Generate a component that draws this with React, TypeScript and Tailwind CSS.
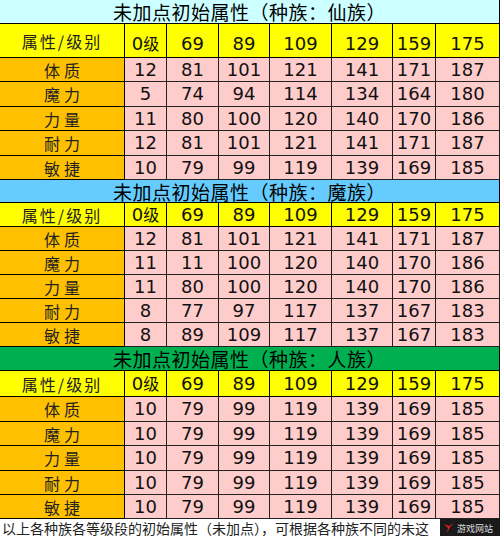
import React from 'react';

type Race = {
  title: string;
  headerBg: string;
  yellowH: string;
  rowHs: string[];
  rows: { label: string; values: number[] }[];
};

const levels = ['0级', '69', '89', '109', '129', '159', '175'];
const colW = ['w-[125px]', 'w-[42px]', 'w-[52px]', 'w-[51px]', 'w-[62px]', 'w-[61px]', 'w-[43px]', 'w-[64px]'];
const labels = ['体质', '魔力', '力量', '耐力', '敏捷'];

const races: Race[] = [
  {
    title: '未加点初始属性（种族：仙族）',
    headerBg: 'bg-[#ccffff] h-[24px]',
    yellowH: 'h-[34px]',
    rowHs: ['h-[24px]', 'h-[25px]', 'h-[24px]', 'h-[25px]', 'h-[24px]'],
    rows: [
      { label: '体质', values: [12, 81, 101, 121, 141, 171, 187] },
      { label: '魔力', values: [5, 74, 94, 114, 134, 164, 180] },
      { label: '力量', values: [11, 80, 100, 120, 140, 170, 186] },
      { label: '耐力', values: [12, 81, 101, 121, 141, 171, 187] },
      { label: '敏捷', values: [10, 79, 99, 119, 139, 169, 185] },
    ],
  },
  {
    title: '未加点初始属性（种族：魔族）',
    headerBg: 'bg-[#66ccff] h-[23px]',
    yellowH: 'h-[24px]',
    rowHs: ['h-[24px]', 'h-[24px]', 'h-[24px]', 'h-[24px]', 'h-[24px]'],
    rows: [
      { label: '体质', values: [12, 81, 101, 121, 141, 171, 187] },
      { label: '魔力', values: [11, 11, 100, 120, 140, 170, 186] },
      { label: '力量', values: [11, 80, 100, 120, 140, 170, 186] },
      { label: '耐力', values: [8, 77, 97, 117, 137, 167, 183] },
      { label: '敏捷', values: [8, 89, 109, 117, 137, 167, 183] },
    ],
  },
  {
    title: '未加点初始属性（种族：人族）',
    headerBg: 'bg-[#00b050] h-[24px]',
    yellowH: 'h-[26px]',
    rowHs: ['h-[25px]', 'h-[24px]', 'h-[25px]', 'h-[24px]', 'h-[24px]'],
    rows: labels.map((label) => ({ label, values: [10, 79, 99, 119, 139, 169, 185] })),
  },
];

const RaceTable: React.FC<{ race: Race; first: boolean }> = ({ race, first }) => (
  <section>
    <div
      className={`${race.headerBg} border-b border-r border-black flex items-center justify-center leading-none text-[19px] tracking-[0.5px] text-black font-['Noto_Sans_CJK_SC',sans-serif]`}
    >
      {race.title}
    </div>
    <div className={`flex ${race.yellowH} bg-[#ffff00]`}>
      <div
        className={`${colW[0]} border-r border-b border-black flex items-center justify-center leading-none text-[16px] tracking-[2px] text-[#222] font-['Noto_Sans_CJK_SC',sans-serif]`}
      >
        属性/级别
      </div>
      {levels.map((lv, i) => (
        <div
          key={lv}
          className={`${colW[i + 1]} border-r border-b border-black flex justify-center leading-none text-[18px] text-[#111] font-['DejaVu_Sans','Noto_Sans_CJK_SC',sans-serif] ${first ? 'items-end pb-[4px]' : 'items-center'}`}
        >
          {lv === '0级' ? (
            <span className="flex items-baseline">
              0<span className="text-[16px] font-['Noto_Sans_CJK_SC',sans-serif]">级</span>
            </span>
          ) : (
            lv
          )}
        </div>
      ))}
    </div>
    {race.rows.map((row, r) => (
      <div key={row.label} className={`flex ${race.rowHs[r]}`}>
        <div
          className={`${colW[0]} bg-[#ffc000] border-r border-b border-black flex items-center justify-center leading-none text-[16px] tracking-[4px] pl-[4px] text-[#222] font-['Noto_Sans_CJK_SC',sans-serif]`}
        >
          {row.label}
        </div>
        {row.values.map((v, i) => (
          <div
            key={i}
            className={`${colW[i + 1]} bg-[#ffcccc] border-r border-b border-[#222] flex items-center justify-center leading-none text-[18px] text-[#111] font-['DejaVu_Sans',sans-serif]`}
          >
            {v}
          </div>
        ))}
      </div>
    ))}
  </section>
);

export default function App() {
  return (
    <div className="w-[500px] h-[536px] bg-white overflow-hidden">
      {races.map((race, i) => (
        <RaceTable key={race.title} race={race} first={i === 0} />
      ))}
      <div className="relative h-[18px] flex items-center pl-[2px] leading-none text-[14px] text-[#222] whitespace-nowrap font-['Noto_Sans_CJK_SC',sans-serif]">
        以上各种族各等级段的初始属性（未加点），可根据各种族不同的未这
        <div className="absolute right-0 top-0 h-[18px] w-[60px] bg-[#1a1a1a] flex items-center gap-[2px] px-[3px]">
          <svg width="12" height="12" viewBox="0 0 12 12">
            <path d="M1 2 L5 6 L4 11 L7 5 L11 1 L6 4 Z" fill="#e02020" />
          </svg>
          <span className="text-[9px] text-[#ddd] leading-none">游戏网站</span>
        </div>
      </div>
    </div>
  );
}
